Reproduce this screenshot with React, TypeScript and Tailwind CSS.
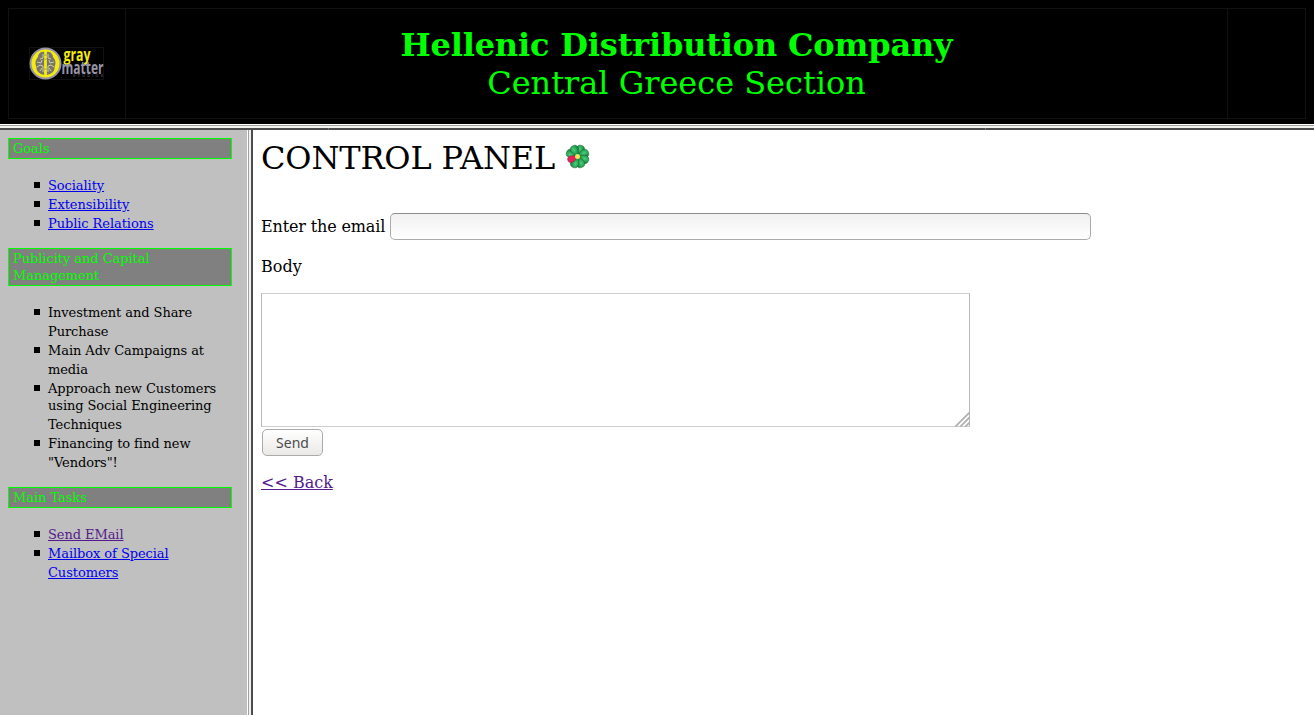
import React from "react";

type Item = { lines: string[]; kind?: "link" | "visited"; tightFirst?: boolean };

const goals: Item[] = [
  { lines: ["Sociality"], kind: "link" },
  { lines: ["Extensibility"], kind: "link" },
  { lines: ["Public Relations"], kind: "link" },
];
const publicity: Item[] = [
  { lines: ["Investment and Share", "Purchase"] },
  { lines: ["Main Adv Campaigns at", "media"] },
  { lines: ["Approach new Customers", "using Social Engineering", "Techniques"], tightFirst: true },
  { lines: ["Financing to find new", "\"Vendors\"!"] },
];
const tasks: Item[] = [
  { lines: ["Send EMail"], kind: "visited" },
  { lines: ["Mailbox of Special", "Customers"], kind: "link" },
];

function Section({ title, items }: { title: string[]; items: Item[] }) {
  return (
    <section className="mb-[15px]">
      <h2 className="border border-[#00ff00] bg-[#808080] pt-px pb-px pl-1 text-[13px] leading-[17px] tracking-[-0.06px] text-[#00ff00]">
        {title.map((t) => (
          <div key={t}>{t}</div>
        ))}
      </h2>
      <ul className="mt-[17px]">
        {items.map((item) => (
          <li key={item.lines[0]} className="flex">
            <span className="mt-[6px] mr-2 ml-[26px] size-[6px] shrink-0 bg-black" />
            <div className="text-[13px] leading-[19px] tracking-[-0.08px] whitespace-nowrap">
              {item.lines.map((line, i) => (
                <div key={line} className={item.tightFirst && i === 0 ? "h-[17px]" : "h-[19px]"}>
                  {item.kind ? (
                    <a
                      href="#"
                      className={item.kind === "visited" ? "text-[#551a8b] underline" : "text-[#0000ee] underline"}
                    >
                      {line}
                    </a>
                  ) : (
                    line
                  )}
                </div>
              ))}
            </div>
          </li>
        ))}
      </ul>
    </section>
  );
}

function Logo() {
  return (
    <svg className="overflow-visible" width="75" height="33" viewBox="0 0 75 33" aria-label="gray matter studios">
      <rect x=".5" y=".5" width="74" height="32" fill="#000" stroke="#111" />
      <circle cx="16.500" cy="16.500" r="15" fill="#f4ec10" stroke="#9491a5" strokeWidth="2" />
      <path d="M15.500 5C11 4 9 8 9 10c-3 3-3 7-1.500 10C7 24 10 27 15.500 28zM17.500 5C22 4 24 8 24 10c3 3 3 7 1.500 10C26 24 23 27 17.500 28z" fill="#77756d" />
      <path d="M14 7v4l-3 1M8 15l4 1 1-3M8 20l3-2 3 1v6M11 24l2-3M19 7v4l3 1M25 15l-4 1-1-3M25 20l-3-2-3 1v6M22 24l-2-3" fill="none" stroke="#d2cda0" strokeWidth="1" />
      <path d="M16.500 4v25" stroke="#f4ec10" strokeWidth="2.500" />
      <path d="M15 8h3M15 12h3M15 22h3" stroke="#a6a139" strokeWidth=".8" />
      <text x="34.500" y="14" fontFamily="Open Sans, sans-serif" fontSize="17" fontWeight="700" textLength="27" lengthAdjust="spacingAndGlyphs" fill="#f4ec10">gray</text>
      <text x="32.500" y="26.500" fontFamily="Open Sans, sans-serif" fontSize="18" fontWeight="700" textLength="42" lengthAdjust="spacingAndGlyphs" fill="#9794a8">matter</text>
      <text x="44" y="30" fontFamily="Liberation Sans, sans-serif" fontSize="3.500" fontWeight="700" textLength="30" fill="#4b4955">STUDIOS</text>
    </svg>
  );
}

const petals = [22, 67, 112, 157, 202, 292, 337];

function Flower() {
  return (
    <svg width="25" height="25" viewBox="0 0 25 25" aria-hidden="true">
      <defs>
        <radialGradient id="petal" cx="40%" cy="35%" r="70%">
          <stop offset="0" stopColor="#4fcf7c" />
          <stop offset=".5" stopColor="#23a050" />
          <stop offset="1" stopColor="#126336" />
        </radialGradient>
      </defs>
      {petals.map((a) => (
        <path key={a} d="M12.500 13C10 10 8 6.500 8.400 4 8.700 1.500 10.500.7 12.500.7S16.300 1.500 16.600 4C17 6.500 15 10 12.500 13z" fill="url(#petal)" stroke="#1a5a36" strokeWidth=".4" transform={`rotate(${a} 12.5 12.5)`} />
      ))}
      <path d="M12.500 12C10 9.500 9 7 9.300 4.800 9.600 2.800 11 2 12.500 2s2.900.8 3.200 2.800C16 7 15 9.500 12.500 12z" fill="#e0245a" stroke="#98103a" strokeWidth=".4" transform="rotate(247 12.5 12.5)" />
      <circle cx="12.500" cy="12.500" r="2.500" fill="#f3e45a" />
    </svg>
  );
}

export default function App() {
  return (
    <div className="flex h-[715px] w-[1314px] flex-col overflow-hidden bg-white font-['DejaVu_Serif',serif] text-black">
      <header className="h-[124px] shrink-0 bg-black p-2">
        <div className="flex h-[111px] w-[1298px] border border-[#111]">
          <div className="flex w-[117px] shrink-0 border-r border-[#111] pt-[38px] pl-[20px]">
            <Logo />
          </div>
          <div className="w-[1102px] shrink-0 border-r border-[#111] pt-[17px] text-center text-[32px] leading-[38px] text-[#00ff00]">
            <h1 className="font-bold tracking-[-0.17px]">Hellenic Distribution Company</h1>
            <p className="tracking-[-0.03px]">Central Greece Section</p>
          </div>
        </div>
      </header>
      <div className="flex h-[6px] shrink-0 flex-col bg-[#f2f1f0]">
        <div className="h-px bg-white" />
        <div className="h-px bg-[#a0a09f]" />
        <div className="h-[2px]" />
        <div className="flex h-[2px] bg-[#4b4b4d]">
          <div className="ml-[328px] w-px bg-[#747476]" />
          <div className="ml-[656px] w-px bg-[#747476]" />
        </div>
      </div>
      <div className="flex min-h-0 flex-1">
        <aside className="w-[247px] shrink-0 bg-[#c0c0c0] pt-2 pr-[15px] pl-2">
          <Section title={["Goals"]} items={goals} />
          <Section title={["Publicity and Capital", "Management"]} items={publicity} />
          <Section title={["Main Tasks"]} items={tasks} />
        </aside>
        <div className="flex w-[6px] shrink-0 bg-[#f2f1f0]">
          <div className="w-px bg-white" />
          <div className="w-px bg-[#a0a09f]" />
          <div className="w-[2px]" />
          <div className="w-[2px] bg-[#4b4b4d]" />
        </div>
        <main className="flex flex-1 flex-col items-start pt-2 pl-2 text-[16px] leading-[19px]">
          <div className="flex h-[38px] items-start text-[32px] leading-[38px]">
            <h1 className="pt-px tracking-[-0.16px]">CONTROL PANEL</h1>
            <span className="mt-[6px] ml-[10px]">
              <Flower />
            </span>
          </div>
          <div className="mt-[37px] flex h-[27px] items-center">
            <label htmlFor="email" className="w-[129px] tracking-[-0.14px] whitespace-nowrap">Enter the email</label>
            <input id="email" className="h-[27px] w-[701px] rounded-[5px] border border-[#aaa] border-t-[#8c8c8c] bg-linear-to-b from-[#f1f1f1] to-white px-2 outline-none" />
          </div>
          <label htmlFor="body" className="mt-[17px]">Body</label>
          <div className="relative mt-[17px] h-[134px] w-[709px]">
            <textarea id="body" className="block h-full w-full resize-none border border-[#b8b8b8] border-t-[#cfcfcf] border-b-[#cfcfcf] bg-white outline-none" />
            <svg className="absolute right-0 bottom-0" width="15" height="15" viewBox="0 0 15 15" fill="none" stroke="#b2b2b2" strokeWidth="1.800" aria-hidden="true">
              <path d="M0 15 15 0M5 15 15 5M10 15l5-5" />
            </svg>
          </div>
          <button className="mt-[2px] ml-px h-[27px] w-[61px] rounded-[5px] border border-[#aaa] bg-linear-to-b from-white to-[#ebe9e7] pt-px font-['Noto_Sans',sans-serif] text-[14px] leading-[24px] text-[#4c4c4c]">
            Send
          </button>
          <a href="#" className="mt-[17px] text-[#551a8b] underline">&lt;&lt; Back</a>
        </main>
      </div>
    </div>
  );
}
